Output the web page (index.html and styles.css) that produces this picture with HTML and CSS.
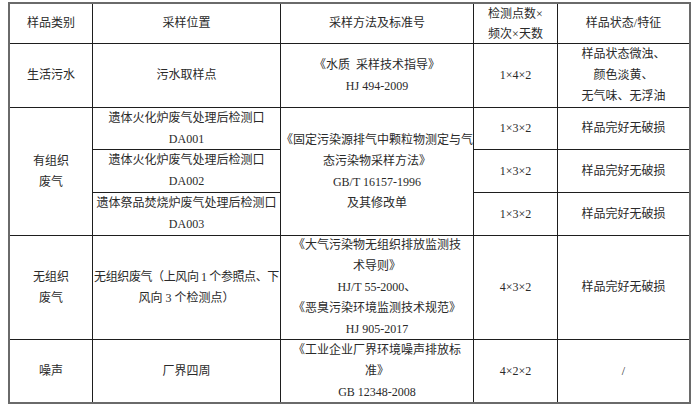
FILE: index.html
```html
<!DOCTYPE html>
<html lang="zh">
<head>
<meta charset="utf-8">
<title>采样信息表</title>
<link rel="stylesheet" href="styles.css">
</head>
<body>
<div class="page">
  <div class="sheet">
    <div class="cell head"><div class="txt">样品类别</div></div>
    <div class="cell head"><div class="txt">采样位置</div></div>
    <div class="cell head"><div class="txt">采样方法及标准号</div></div>
    <div class="cell head tight"><div class="txt">检测点数×<br>频次×天数</div></div>
    <div class="cell head"><div class="txt">样品状态/特征</div></div>

    <div class="cell"><div class="txt">生活污水</div></div>
    <div class="cell"><div class="txt">污水取样点</div></div>
    <div class="cell"><div class="txt">《水质&nbsp;&nbsp;采样技术指导》<br>HJ 494-2009</div></div>
    <div class="cell"><div class="txt">1×4×2</div></div>
    <div class="cell"><div class="txt">样品状态微浊、<br>颜色淡黄、<br>无气味、无浮油</div></div>

    <div class="cell span3"><div class="txt">有组织<br>废气</div></div>
    <div class="cell"><div class="txt">遗体火化炉废气处理后检测口<br>DA001</div></div>
    <div class="cell span3"><div class="txt">《固定污染源排气中颗粒物测定与气<br>态污染物采样方法》<br>GB/T 16157-1996<br>及其修改单</div></div>
    <div class="cell"><div class="txt">1×3×2</div></div>
    <div class="cell"><div class="txt">样品完好无破损</div></div>

    <div class="cell"><div class="txt">遗体火化炉废气处理后检测口<br>DA002</div></div>
    <div class="cell"><div class="txt">1×3×2</div></div>
    <div class="cell"><div class="txt">样品完好无破损</div></div>

    <div class="cell"><div class="txt">遗体祭品焚烧炉废气处理后检测口<br>DA003</div></div>
    <div class="cell"><div class="txt">1×3×2</div></div>
    <div class="cell"><div class="txt">样品完好无破损</div></div>

    <div class="cell"><div class="txt">无组织<br>废气</div></div>
    <div class="cell"><div class="txt"><span class="squeeze">无组织废气（上风向 1 个参照点、下</span><br>风向 3 个检测点）</div></div>
    <div class="cell"><div class="txt">《大气污染物无组织排放监测技<br>术导则》<br>HJ/T 55-2000、<br>《恶臭污染环境监测技术规范》<br>HJ 905-2017</div></div>
    <div class="cell"><div class="txt">4×3×2</div></div>
    <div class="cell"><div class="txt">样品完好无破损</div></div>

    <div class="cell"><div class="txt">噪声</div></div>
    <div class="cell"><div class="txt">厂界四周</div></div>
    <div class="cell"><div class="txt">《工业企业厂界环境噪声排放标<br>准》<br>GB 12348-2008</div></div>
    <div class="cell"><div class="txt">4×2×2</div></div>
    <div class="cell"><div class="txt">/</div></div>
  </div>
</div>
</body>
</html>
```

FILE: styles.css
```css
html, body {
  margin: 0;
  padding: 0;
  background: #ffffff;
}

.page {
  padding: 2px 0 0 8px;
}

.sheet {
  display: grid;
  width: 679px;
  grid-template-columns: 82px 187px 192px 83px 131px;
  grid-template-rows: 39px 63px 41px 42px 42px 103px 62px;
  gap: 1px;
  background: #1e1e1e;
  border: 2px solid #6a6a6a;
  font-family: "Liberation Serif", "Noto Sans CJK SC", serif;
  font-size: 12px;
  line-height: 21px;
  color: #2a2a2a;
}

.cell {
  background: #ffffff;
  display: flex;
  align-items: center;
  justify-content: center;
  text-align: center;
  white-space: nowrap;
}

.txt {
  flex: none;
}

.tight {
  line-height: 20px;
}

.span3 {
  grid-row: span 3;
}

.squeeze {
  letter-spacing: -0.4px;
}
```
